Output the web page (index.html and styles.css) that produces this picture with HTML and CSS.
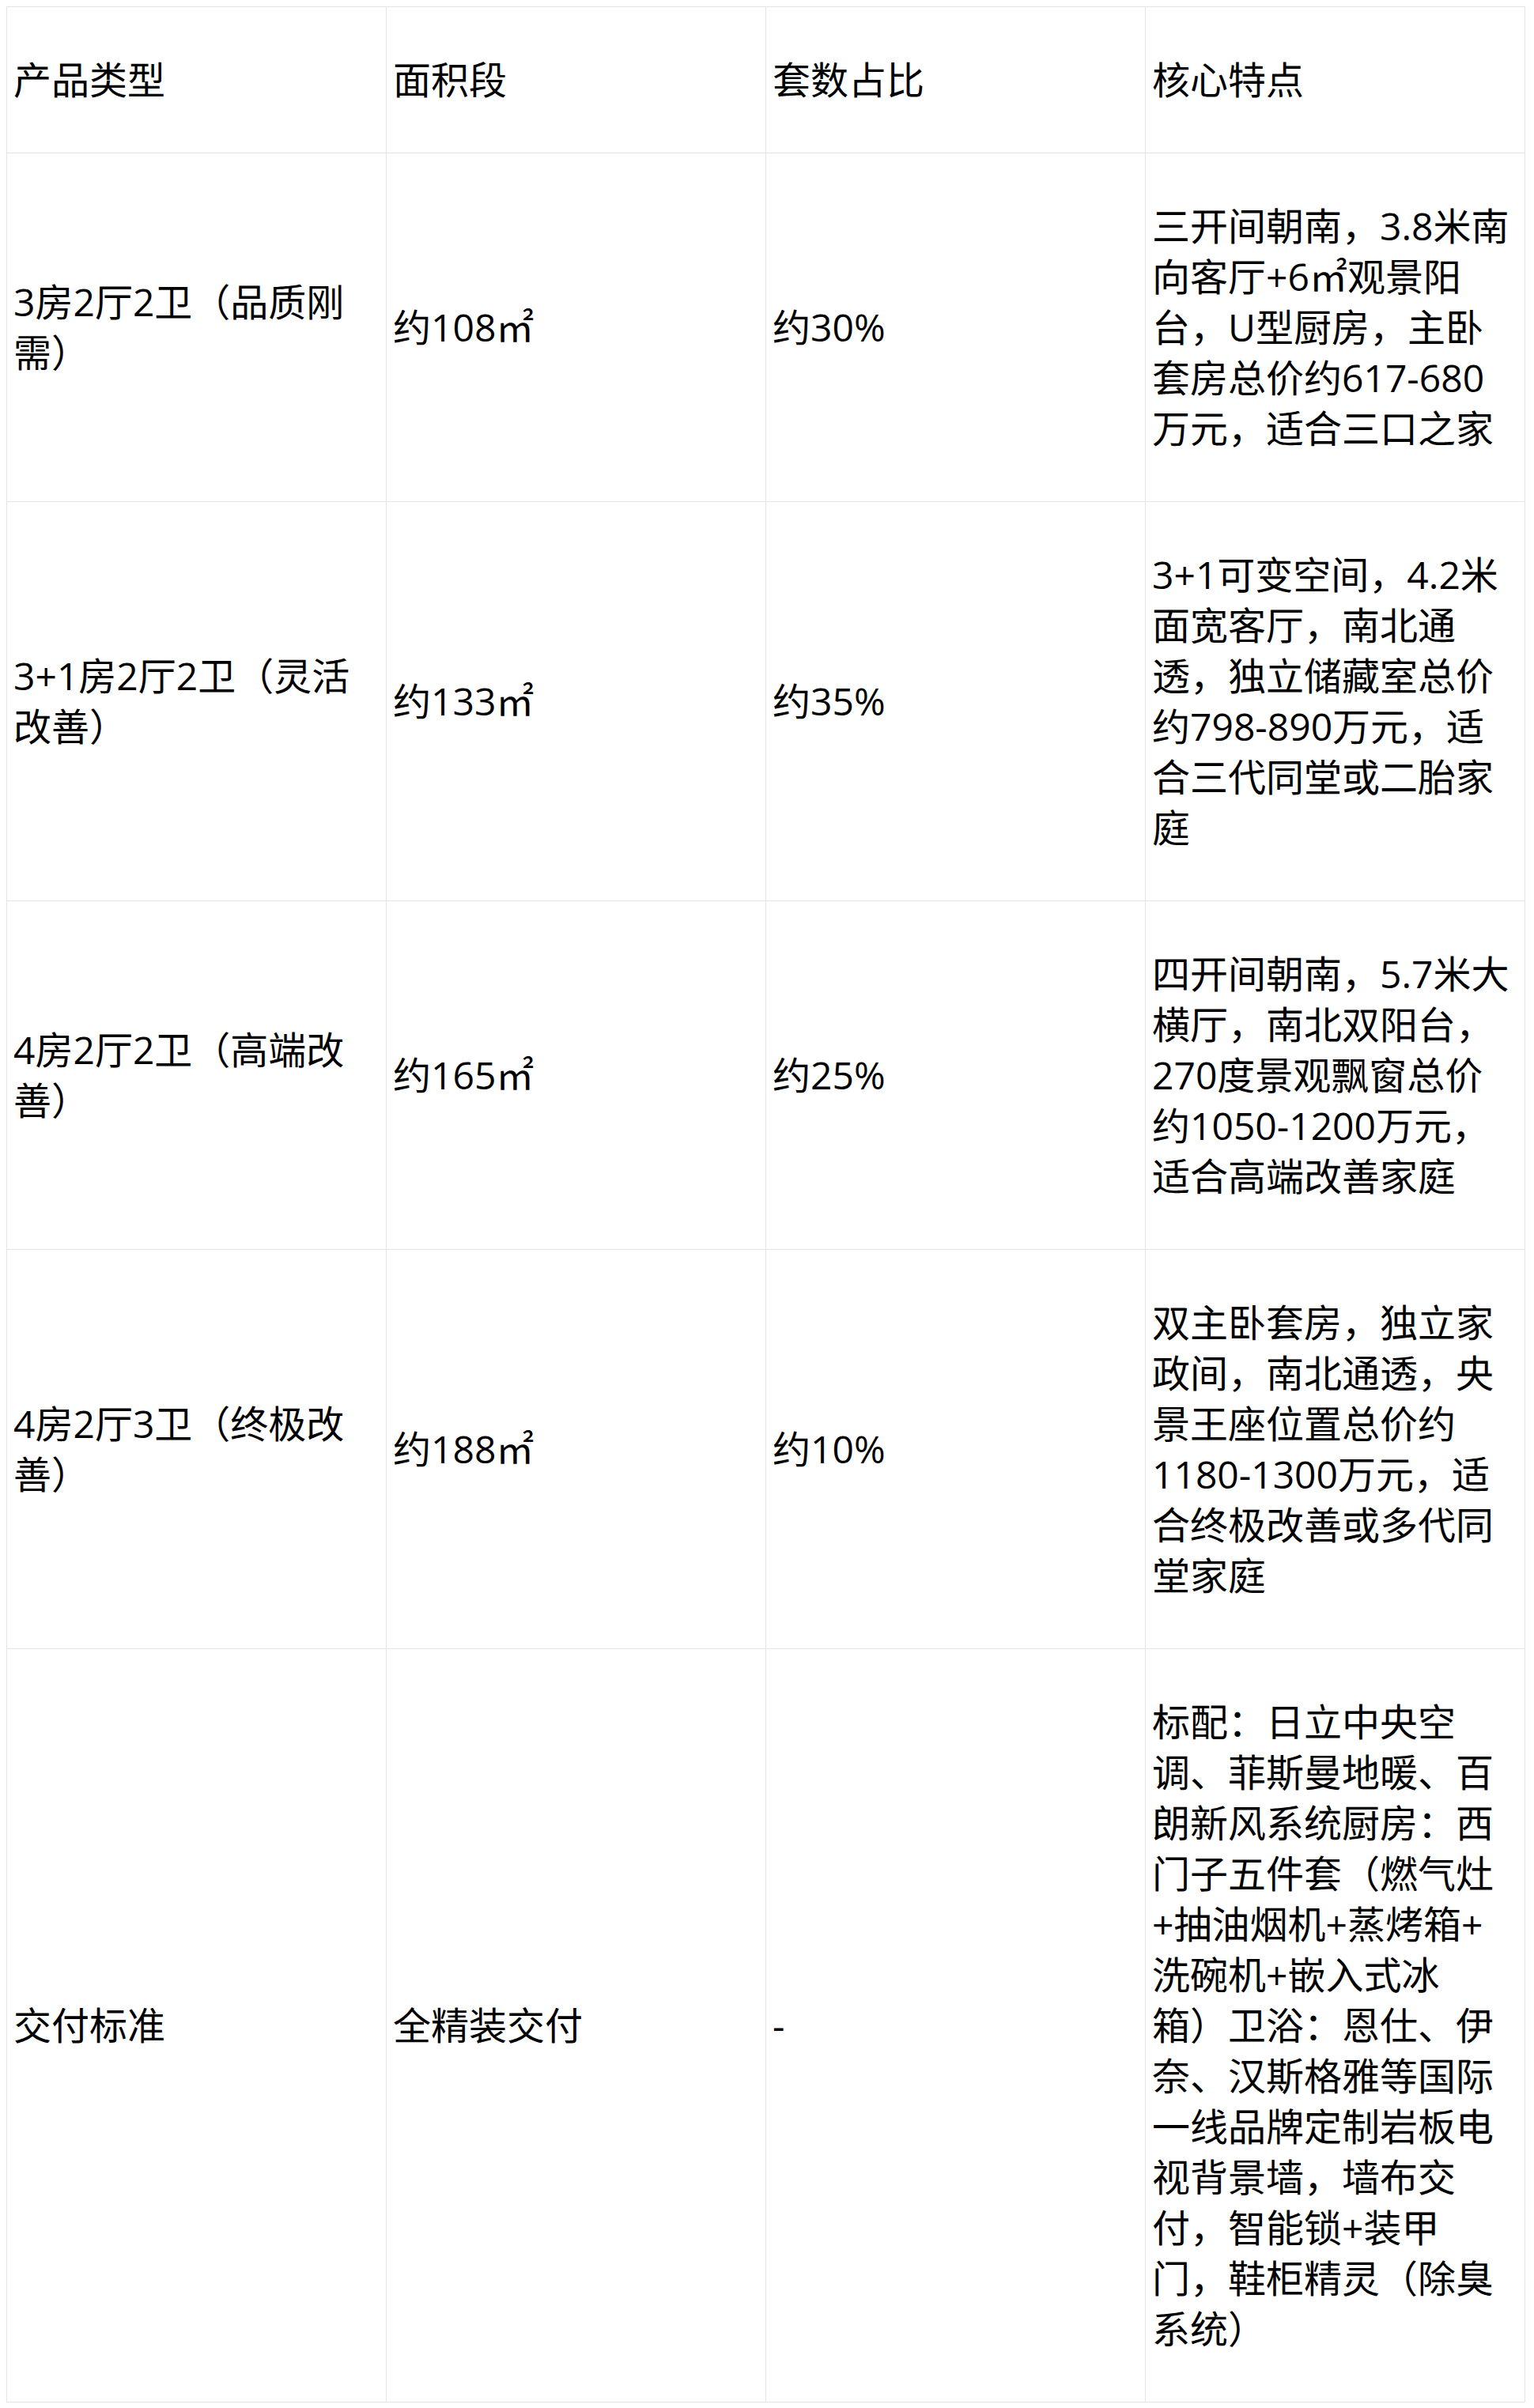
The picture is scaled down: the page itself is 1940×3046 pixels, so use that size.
FILE: index.html
```html
<!DOCTYPE html>
<html lang="zh-CN">
<head>
<meta charset="utf-8">
<title>产品类型</title>
<link rel="stylesheet" href="styles.css">
</head>
<body>
<table class="spec-table">
  <colgroup>
    <col class="col"><col class="col"><col class="col"><col class="col">
  </colgroup>
  <thead>
    <tr>
      <th>产品类型</th>
      <th>面积段</th>
      <th>套数占比</th>
      <th>核心特点</th>
    </tr>
  </thead>
  <tbody>
    <tr>
      <td>3房2厅2卫（品质刚需）</td>
      <td>约108㎡</td>
      <td>约30%</td>
      <td>三开间朝南，3.8米南向客厅+6㎡观景阳台，U型厨房，主卧套房总价约617-680万元，适合三口之家</td>
    </tr>
    <tr>
      <td>3+1房2厅2卫（灵活改善）</td>
      <td>约133㎡</td>
      <td>约35%</td>
      <td>3+1可变空间，4.2米面宽客厅，南北通透，独立储藏室总价约798-890万元，适合三代同堂或二胎家庭</td>
    </tr>
    <tr>
      <td>4房2厅2卫（高端改善）</td>
      <td>约165㎡</td>
      <td>约25%</td>
      <td>四开间朝南，5.7米大横厅，南北双阳台，270度景观飘窗总价约1050-1200万元，适合高端改善家庭</td>
    </tr>
    <tr>
      <td>4房2厅3卫（终极改善）</td>
      <td>约188㎡</td>
      <td>约10%</td>
      <td>双主卧套房，独立家政间，南北通透，央景王座位置总价约1180-1300万元，适合终极改善或多代同堂家庭</td>
    </tr>
    <tr>
      <td>交付标准</td>
      <td>全精装交付</td>
      <td>-</td>
      <td>标配：日立中央空调、菲斯曼地暖、百朗新风系统厨房：西门子五件套（燃气灶+抽油烟机+蒸烤箱+<wbr>洗碗机+嵌入式冰箱）卫浴：恩仕、伊奈、汉斯格雅等国际一线品牌定制岩板电视背景墙，墙布交付，智能锁+装甲门，鞋柜精灵（除臭系统）</td>
    </tr>
  </tbody>
</table>
</body>
</html>
```

FILE: styles.css
```css
html, body {
  background: #ffffff;
}

body {
  margin: 8px;
  font-family: "Open Sans", "Noto Sans CJK SC", sans-serif;
  color: #000000;
}

.spec-table {
  width: 1921px;
  table-layout: fixed;
  border-collapse: collapse;
  font-size: 48px;
  line-height: 64px;
  text-spacing-trim: space-all;
}

.spec-table .col {
  width: 25%;
}

.spec-table th,
.spec-table td {
  border: 1px solid #e4e4ec;
  padding: 60px 16px 60px 8px;
  text-align: left;
  vertical-align: middle;
  font-weight: 400;
  word-wrap: break-word;
}
```
